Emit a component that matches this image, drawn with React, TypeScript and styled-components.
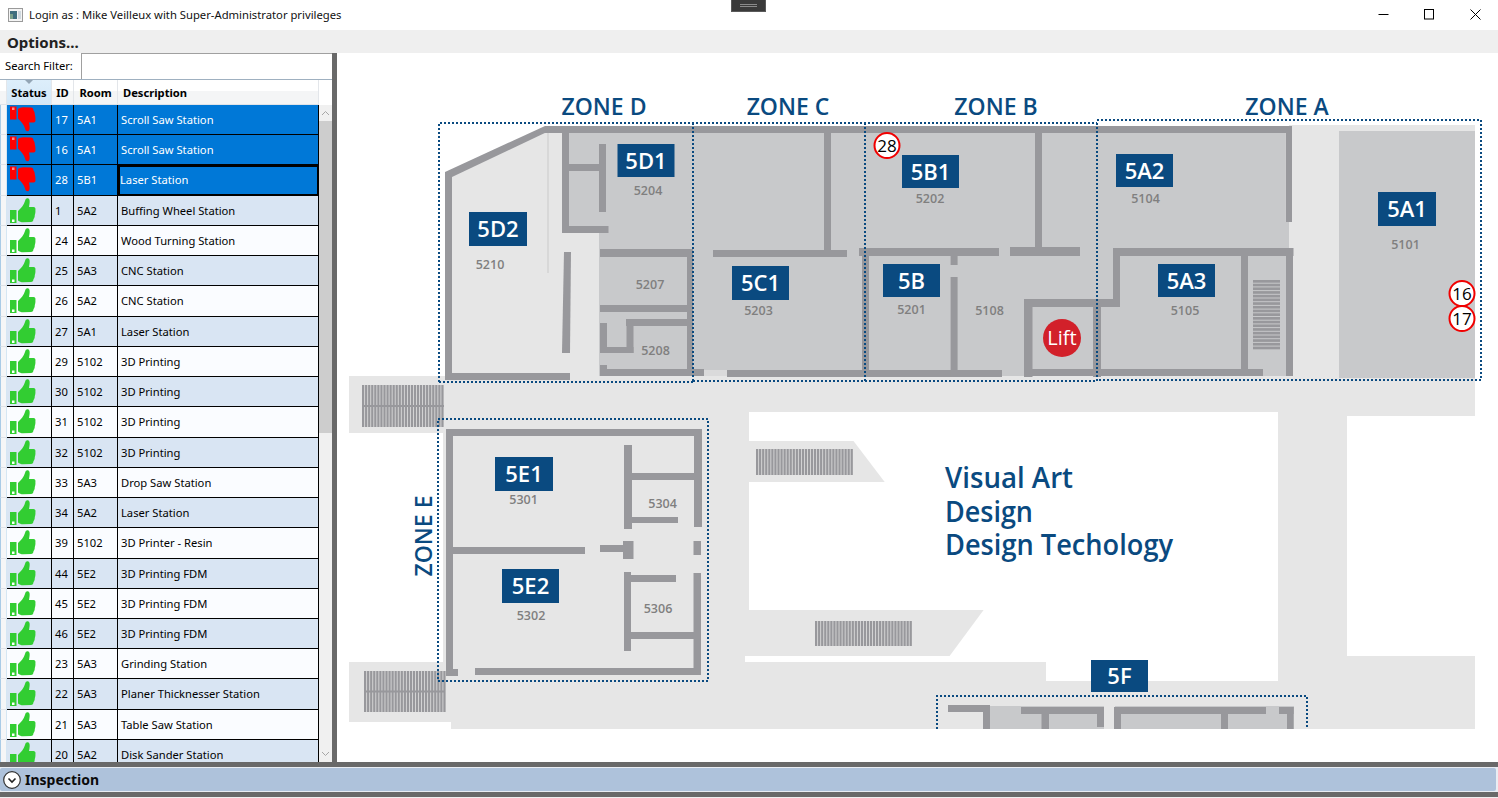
import React from "react";
import styled, { createGlobalStyle } from "styled-components";

const Global = createGlobalStyle`
  html, body { margin: 0; padding: 0; background: #fff; overflow: hidden; }
  body { font-family: "Noto Sans", "Open Sans", Arial, sans-serif; color: #000; }
  * { box-sizing: border-box; }
`;

const Page = styled.div`
  position: relative;
  width: 1498px;
  height: 798px;
  display: flex;
  flex-direction: column;
  overflow: hidden;
  background: #fff;
`;

const TitleBar = styled.div`
  height: 30px;
  flex: none;
  display: flex;
  align-items: center;
  padding-left: 8px;
  background: #fff;
  font-size: 11.25px;
  color: #111;
`;

const TitleText = styled.span`
  margin-left: 6px;
  margin-top: -1px;
`;

const WindowControls = styled.div`
  margin-left: auto;
  display: flex;
  align-items: center;
  height: 100%;
  padding-right: 17px;
  gap: 35px;
  margin-top: -1px;
`;

const DockTab = styled.div`
  position: absolute;
  left: 731px;
  top: 0;
  width: 35px;
  height: 12px;
  background: #3a3a3a;
  border: 1px solid #5a5a5a;
  border-top: none;
  display: flex;
  flex-direction: column;
  align-items: center;
  justify-content: center;
  gap: 1px;
`;

const DockLine = styled.div`
  width: 17px;
  height: 1px;
  background: #8a8a8a;
`;

const MenuBar = styled.div`
  height: 23px;
  flex: none;
  background: #efefef;
  padding-left: 7px;
  font-size: 15px;
  font-weight: 700;
  line-height: 25px;
  color: #222;
`;

const Main = styled.div`
  flex: 1;
  min-height: 0;
  display: flex;
`;

const LeftPanel = styled.div`
  width: 332px;
  flex: none;
  display: flex;
  flex-direction: column;
  background: #fff;
`;

const SearchRow = styled.div`
  height: 27px;
  flex: none;
  display: flex;
  align-items: stretch;
  border-bottom: 1px solid #9fb0c0;
`;

const SearchLabel = styled.label`
  width: 81px;
  flex: none;
  padding-left: 5px;
  font-size: 11.2px;
  line-height: 26px;
`;

const SearchInput = styled.div`
  flex: 1;
  border-left: 1px solid #a0a0a0;
  border-top: 1px solid #a0a0a0;
  background: #fff;
`;

const GridArea = styled.div`
  flex: 1;
  min-height: 0;
  display: flex;
  overflow: hidden;
`;

const Table = styled.div`
  width: 319px;
  flex: none;
  overflow: hidden;
`;

const HeaderRow = styled.div`
  position: relative;
  height: 25px;
  display: grid;
  grid-template-columns: 7px 45px 22px 44px 201px;
  background: linear-gradient(#ffffff 0 45%, #f4f5f6 45% 100%);
  border-bottom: 1px solid #dfe3e8;
  font-size: 11.2px;
  font-weight: 700;
  line-height: 25px;
`;

const HeaderCell = styled.div<{ $active?: boolean; $center?: boolean }>`
  border-right: 1px solid #e3e6ea;
  white-space: nowrap;
  overflow: hidden;
  text-align: ${(p) => (p.$center ? "center" : "left")};
  padding-left: ${(p) => (p.$center ? "0" : "5px")};
  background: ${(p) => (p.$active ? "linear-gradient(#ddeefb, #d3e8f8)" : "transparent")};
`;

const SortArrow = styled.div`
  position: absolute;
  left: 25px;
  top: 0;
  width: 0;
  height: 0;
  border-left: 4px solid transparent;
  border-right: 4px solid transparent;
  border-top: 4px solid #93a5b5;
`;

const RowGutter = styled.div`
  border-left: 1px solid #a9cbe6;
  border-right: 1px solid #d5e6f3;
  background: #f5f6f7;
  border-bottom: 1px solid #dfe3e8;
`;

const Row = styled.div<{ $bg: string; $fg: string }>`
  height: 30.24px;
  display: grid;
  grid-template-columns: 7px 45px 22px 44px 201px;
  background: ${(p) => p.$bg};
  color: ${(p) => p.$fg};
  font-size: 11.2px;
  line-height: 29px;
`;

const Cell = styled.div<{ $focus?: boolean }>`
  border-right: 1px solid #000;
  border-bottom: 1px solid #000;
  padding-left: ${(p) => (p.$focus ? "2px" : "3px")};
  white-space: nowrap;
  overflow: hidden;
  outline: ${(p) => (p.$focus ? "2px solid #000" : "none")};
  outline-offset: -2px;
`;

const StatusCell = styled(Cell)`
  padding: 0;
  position: relative;
`;

const ThumbSvg = styled.svg`
  position: absolute;
  left: 3px;
  top: 1px;
  display: block;
`;

const ScrollBar = styled.div`
  width: 13px;
  flex: none;
  display: flex;
  flex-direction: column;
  padding-top: 25px;
  background: #fff;
`;

const ScrollButton = styled.div`
  height: 16px;
  flex: none;
  background: #f0f0f0;
  display: flex;
  align-items: center;
  justify-content: center;
`;

const ScrollThumb = styled.div`
  height: 312px;
  flex: none;
  background: #cdcdcd;
`;

const ScrollTrack = styled.div`
  flex: 1;
  background: #f0f0f0;
`;

const Splitter = styled.div`
  width: 5px;
  flex: none;
  background: #696969;
`;

const MapPane = styled.div`
  flex: 1;
  min-width: 0;
  background: #fff;
  overflow: hidden;
`;

const MapSvg = styled.svg`
  display: block;
  font-family: "Open Sans", "Noto Sans", Arial, sans-serif;
`;

const Footer = styled.div`
  height: 36px;
  flex: none;
  background: #696969;
  padding-top: 5px;
`;

const Expander = styled.div`
  height: 25px;
  padding: 1px 2px 1px 0;
  background: #e9edf3;
`;

const ExpanderInner = styled.div`
  height: 23px;
  background: #aec2db;
  border-radius: 2px;
  display: flex;
  align-items: center;
  gap: 4px;
  padding-left: 3px;
  font-size: 14px;
  font-weight: 700;
  color: #0b0b0b;
`;

const BottomEdge = styled.div`
  height: 1px;
  background: #f0f0f0;
  margin-top: 5px;
`;

const rows: [number, string, string, boolean][] = [
  [17, "5A1", "Scroll Saw Station", false],
  [16, "5A1", "Scroll Saw Station", false],
  [28, "5B1", "Laser Station", false],
  [1, "5A2", "Buffing Wheel Station", true],
  [24, "5A2", "Wood Turning Station", true],
  [25, "5A3", "CNC Station", true],
  [26, "5A2", "CNC Station", true],
  [27, "5A1", "Laser Station", true],
  [29, "5102", "3D Printing", true],
  [30, "5102", "3D Printing", true],
  [31, "5102", "3D Printing", true],
  [32, "5102", "3D Printing", true],
  [33, "5A3", "Drop Saw Station", true],
  [34, "5A2", "Laser Station", true],
  [39, "5102", "3D Printer - Resin", true],
  [44, "5E2", "3D Printing FDM", true],
  [45, "5E2", "3D Printing FDM", true],
  [46, "5E2", "3D Printing FDM", true],
  [23, "5A3", "Grinding Station", true],
  [22, "5A3", "Planer Thicknesser Station", true],
  [21, "5A3", "Table Saw Station", true],
  [20, "5A2", "Disk Sander Station", true],
];

const Thumb = ({ up }: { up: boolean }) => (
  <ThumbSvg width="27" height="28" viewBox="0 0 27 28">
    <g
      transform={up ? undefined : "translate(0 26.5) scale(1 -1)"}
      fill={up ? "#32cd32" : "#ff0000"}
    >
      <rect x="0" y="13" width="6.5" height="13" />
      <rect x="2" y="22.5" width="2.5" height="2.5" fill="#fff" opacity={up ? 1 : 0.55} />
      <path d="M8 14 C11 11 14 8 15 4 C15.5 1.5 17 1 18.5 1.5 C20 2.5 20 5 19 10 L23.5 10 C25.2 10 25.8 11.5 25.4 13 C25.6 15 25.2 17 24.8 18 C24.8 20 24.2 21.5 23.5 22 C23.5 24 22.5 25 21 25 L13 25.3 C11 25.3 9.5 24.5 8 23.5 Z" />
    </g>
  </ThumbSvg>
);

const WALL = "#98989c";
const ROOM = "#c8c9cb";
const FLOOR = "#e6e6e6";
const BLUE = "#0a4a80";

type R = [number, number, number, number];

const floorRects: R[] = [
  [349, 376, 94, 57],
  [443, 376, 1032, 353],
  [1289, 125, 186, 260],
  [349, 662, 100, 60],
];

const whiteRects: R[] = [
  [749, 412, 529, 250],
  [1046, 662, 232, 19],
  [1347, 416, 151, 240],
  [745, 656, 240, 6],
];

const roomRects: R[] = [
  [1339, 131, 136, 247],
  [990, 706, 114, 23],
  [1115, 706, 179, 23],
];

const walls: R[] = [
  [445, 373, 125, 7],
  [445, 172, 7, 208],
  [545, 126, 747, 7],
  [1285.5, 126, 6.5, 96],
  [562, 133, 7, 100],
  [562, 226, 46.5, 7],
  [569, 164, 30, 7],
  [599, 144, 7, 68],
  [600, 249, 93, 8],
  [687, 249, 6, 127],
  [600, 305, 87, 7],
  [626, 319, 61, 7],
  [626.5, 319, 7, 34],
  [600, 347, 33.5, 6],
  [600, 323, 7, 30],
  [600, 369, 104, 7],
  [600, 365, 7, 11],
  [727, 370, 275, 7],
  [824, 133, 7, 124],
  [713, 250, 134, 7],
  [859, 248, 140, 8],
  [1010, 247, 70, 9],
  [862, 253, 7, 124],
  [950.6, 256, 7, 9],
  [950.6, 277, 7, 100],
  [1035, 133, 7, 117],
  [1024, 299, 8.5, 78],
  [1024, 299, 96, 8],
  [1113, 248, 7, 58],
  [1113, 248, 180.5, 8],
  [1093, 307, 8, 70],
  [1024, 369, 239, 7],
  [1241, 256, 7, 114],
  [1286, 248, 7, 128],
  [446, 429, 256, 7],
  [446, 429, 7, 247],
  [694, 429, 8, 98],
  [624, 445, 8, 84],
  [632, 473, 62, 7],
  [632, 517, 46, 6],
  [453, 547, 132, 7],
  [600, 545, 26, 7],
  [623, 541, 10.5, 18],
  [693.5, 541, 7.5, 14],
  [624, 572, 7, 79],
  [631, 575, 45, 7],
  [631, 632, 63, 7],
  [693.5, 573, 7.5, 102],
  [475, 668, 226, 7],
  [446, 669, 12, 7],
  [948, 705, 42, 7],
  [983, 705, 7, 24],
  [1021, 707, 83, 7],
  [1041.5, 714, 7.5, 15],
  [1097, 707, 7, 20],
  [1114, 707, 152, 7],
  [1114, 707, 7, 22],
  [1221, 714, 7, 15],
  [1279, 707, 14.6, 7],
  [1287, 707, 6.6, 22],
];

const labels: [string, number, number, number, number][] = [
  ["5D1", 617.5, 144, 57, 33],
  ["5D2", 469, 212, 58, 34],
  ["5B1", 902, 155, 57, 33],
  ["5C1", 732, 266, 57, 34],
  ["5B", 883, 264, 57, 33],
  ["5A2", 1116, 154, 57, 33],
  ["5A1", 1378, 192, 58, 34],
  ["5A3", 1158, 264, 57, 33],
  ["5E1", 495, 457, 58, 34],
  ["5E2", 502, 569, 57, 34],
  ["5F", 1091, 660, 57, 32],
];

const numbers: [string, number, number][] = [
  ["5204", 648, 190],
  ["5210", 490, 264],
  ["5207", 650, 284.5],
  ["5208", 655.5, 350.5],
  ["5203", 758.5, 310.5],
  ["5202", 930, 198],
  ["5201", 911.5, 309.5],
  ["5108", 989.5, 310.5],
  ["5104", 1145.5, 198.5],
  ["5101", 1405.5, 244.5],
  ["5105", 1185, 310.5],
  ["5301", 523.6, 499],
  ["5302", 531, 615.6],
  ["5304", 662.6, 503],
  ["5306", 658, 608],
];

const zones: [string, number][] = [
  ["ZONE D", 604],
  ["ZONE C", 788],
  ["ZONE B", 996],
  ["ZONE A", 1287],
];

const pins: [string, number, number][] = [
  ["28", 887, 145.5],
  ["16", 1462, 293.5],
  ["17", 1462, 318.5],
];

const Stairs = ({ x, y, w, h, mid }: { x: number; y: number; w: number; h: number; mid?: boolean }) => {
  const n = Math.ceil(w / 3.05);
  return (
    <g fill={WALL}>
      {Array.from({ length: n }, (_, i) => (
        <rect key={i} x={x + i * 3.05} y={y} width={2.3} height={h} />
      ))}
      {mid && <rect x={x} y={y + h / 2 - 1} width={w} height={2} />}
    </g>
  );
};

const HStairs = ({ x, y, w, h }: { x: number; y: number; w: number; h: number }) => {
  const n = Math.floor(h / 3.7);
  return (
    <g fill={WALL}>
      {Array.from({ length: n }, (_, i) => (
        <rect key={i} x={x} y={y + i * 3.7} width={w} height={2.7} />
      ))}
    </g>
  );
};

const Dotted = ({ d }: { d: string }) => (
  <path d={d} fill="none" stroke={BLUE} strokeWidth="2" strokeDasharray="2 2" />
);

const FloorMap = () => (
  <MapSvg width="1161" height="709" viewBox="337 53 1161 709">
    <defs>
      <clipPath id="floorClip">
        <rect x="337" y="53" width="1161" height="676" />
      </clipPath>
    </defs>
    <g clipPath="url(#floorClip)">
      {floorRects.map((r, i) => (
        <rect key={i} x={r[0]} y={r[1]} width={r[2]} height={r[3]} fill={FLOOR} />
      ))}
      <rect x="349" y="722" width="102" height="8" fill="#fff" />
      <rect x="349" y="433" width="94" height="229" fill="#fff" />
      {whiteRects.map((r, i) => (
        <rect key={i} x={r[0]} y={r[1]} width={r[2]} height={r[3]} fill="#fff" />
      ))}
      <polygon points="749,441 853.5,441 884.7,482 749,482" fill={FLOOR} />
      <polygon points="748,610 983.6,610 949.6,656 748,656" fill={FLOOR} />
      <polygon points="452,176 545,131 562,131 562,233 599,233 599,376 450,376" fill={FLOOR} />
      <polygon
        points="569,133 1285,133 1285,222 1289,222 1289,248 1293,248 1293,376 599,376 599,233 569,233"
        fill={ROOM}
      />
      {roomRects.map((r, i) => (
        <rect key={i} x={r[0]} y={r[1]} width={r[2]} height={r[3]} fill={ROOM} />
      ))}
      <rect x="547" y="133" width="2" height="140" fill="#d8d8d8" />
      <rect x="693" y="370" width="34" height="6" fill={FLOOR} opacity="0.6" />

      {walls.map((r, i) => (
        <rect key={i} x={r[0]} y={r[1]} width={r[2]} height={r[3]} fill={WALL} />
      ))}
      <polygon points="445,172 545,126 549,131 452,177" fill={WALL} />
      <polygon points="564,252 571,252 570,353 562,353" fill={WALL} />

      <Stairs x={362} y={385} w={82} h={42} mid />
      <Stairs x={364} y={671} w={81} h={41} mid />
      <Stairs x={756} y={449} w={97} h={26} />
      <Stairs x={815} y={621} w={97} h={25} />
      <HStairs x={1253} y={280} w={27} h={71} />

      <circle cx="1062" cy="338" r="19" fill="#d2202a" />
      <text x="1062" y="345" textAnchor="middle" fontSize="20" fill="#fff">
        Lift
      </text>

      <Dotted d="M439 382 V123 H1097" />
      <Dotted d="M439 382 H693 M693 381 H1097 M693 123 V381 M865 123 V381" />
      <Dotted d="M1097 120 H1481 V380 H1097 M1097 123 V381" />
      <Dotted d="M438 419 H708 V681 H438 Z" />
      <Dotted d="M937 729 V696 H1307 V729" />

      {labels.map(([t, x, y, w, h]) => (
        <g key={t}>
          <rect x={x} y={y} width={w} height={h} fill={BLUE} />
          <text
            x={x + w / 2}
            y={y + h / 2 + 8}
            textAnchor="middle"
            fontSize="22"
            fontWeight="600"
            fill="#fff"
          >
            {t}
          </text>
        </g>
      ))}

      {numbers.map(([t, x, y]) => (
        <text key={t} x={x} y={y + 4.5} textAnchor="middle" fontSize="12.5" fontWeight="600" fill="#807f7f">
          {t}
        </text>
      ))}
    </g>

    {zones.map(([t, x]) => (
      <text key={t} x={x} y={115} textAnchor="middle" fontSize="23" fontWeight="600" fill={BLUE}>
        {t}
      </text>
    ))}
    <text
      transform="translate(432 536) rotate(-90)"
      textAnchor="middle"
      fontSize="23"
      fontWeight="600"
      fill={BLUE}
    >
      ZONE E
    </text>

    <g fontSize="28.5" fontWeight="600" fill={BLUE} lengthAdjust="spacingAndGlyphs">
      <text x="945" y="488" textLength="128" lengthAdjust="spacingAndGlyphs">Visual Art</text>
      <text x="945" y="521.5" textLength="88" lengthAdjust="spacingAndGlyphs">Design</text>
      <text x="945" y="555" textLength="228" lengthAdjust="spacingAndGlyphs">Design Techology</text>
    </g>

    {pins.map(([t, x, y]) => (
      <g key={t}>
        <circle cx={x} cy={y} r="12.5" fill="#fff" stroke="#f00000" strokeWidth="2" />
        <text x={x} y={y + 6} textAnchor="middle" fontSize="17" fill="#000">
          {t}
        </text>
      </g>
    ))}
  </MapSvg>
);

export default function App() {
  return (
    <Page>
      <Global />
      <TitleBar>
        <svg width="15" height="14" viewBox="0 0 15 14">
          <rect x="0.5" y="0.5" width="14" height="13" fill="#f4f4f4" stroke="#9a9a9a" />
          <rect x="2" y="3" width="7" height="8" fill="#3f6f7f" />
          <rect x="2" y="6" width="3" height="5" fill="#7aa08a" />
          <rect x="10" y="3" width="3" height="8" fill="#cfd8de" />
        </svg>
        <TitleText>Login as : Mike Veilleux with Super-Administrator privileges</TitleText>
        <WindowControls>
          <svg width="11" height="11" viewBox="0 0 11 11">
            <path d="M0.5 5.5 H10.5" stroke="#000" strokeWidth="1" />
          </svg>
          <svg width="11" height="11" viewBox="0 0 11 11">
            <rect x="0.5" y="0.5" width="9" height="9.5" fill="none" stroke="#000" />
          </svg>
          <svg width="11" height="11" viewBox="0 0 11 11">
            <path d="M0.5 0.5 L10.5 10.5 M10.5 0.5 L0.5 10.5" stroke="#000" strokeWidth="1" />
          </svg>
        </WindowControls>
      </TitleBar>
      <DockTab>
        <DockLine />
        <DockLine />
      </DockTab>
      <MenuBar>Options...</MenuBar>
      <Main>
        <LeftPanel>
          <SearchRow>
            <SearchLabel>Search Filter:</SearchLabel>
            <SearchInput />
          </SearchRow>
          <GridArea>
            <Table>
              <HeaderRow>
                <HeaderCell />
                <HeaderCell $active $center>Status</HeaderCell>
                <HeaderCell $center>ID</HeaderCell>
                <HeaderCell $center>Room</HeaderCell>
                <HeaderCell>Description</HeaderCell>
                <SortArrow />
              </HeaderRow>
              {rows.map(([id, room, desc, ok], i) => {
                const selected = i < 3;
                const bg = selected ? "#0078d7" : i % 2 === 1 ? "#d9e5f3" : "#fafcff";
                return (
                  <Row key={id} $bg={bg} $fg={selected ? "#fff" : "#000"}>
                    <RowGutter />
                    <StatusCell>
                      <Thumb up={ok} />
                    </StatusCell>
                    <Cell>{id}</Cell>
                    <Cell>{room}</Cell>
                    <Cell $focus={i === 2}>{desc}</Cell>
                  </Row>
                );
              })}
            </Table>
            <ScrollBar>
              <ScrollButton>
                <svg width="9" height="6" viewBox="0 0 9 6">
                  <path d="M1 5 L4.5 1.5 L8 5" fill="none" stroke="#a6a6a6" strokeWidth="1" />
                </svg>
              </ScrollButton>
              <ScrollThumb />
              <ScrollTrack />
              <ScrollButton>
                <svg width="9" height="6" viewBox="0 0 9 6">
                  <path d="M1 1 L4.5 4.5 L8 1" fill="none" stroke="#a6a6a6" strokeWidth="1" />
                </svg>
              </ScrollButton>
            </ScrollBar>
          </GridArea>
        </LeftPanel>
        <Splitter />
        <MapPane>
          <FloorMap />
        </MapPane>
      </Main>
      <Footer>
        <Expander>
          <ExpanderInner>
            <svg width="18" height="18" viewBox="0 0 18 18">
              <circle cx="9" cy="9" r="8.3" fill="#fff" stroke="#333" strokeWidth="1.2" />
              <path d="M5.5 7.5 L9 11 L12.5 7.5" fill="none" stroke="#222" strokeWidth="1.6" />
            </svg>
            Inspection
          </ExpanderInner>
        </Expander>
        <BottomEdge />
      </Footer>
    </Page>
  );
}
